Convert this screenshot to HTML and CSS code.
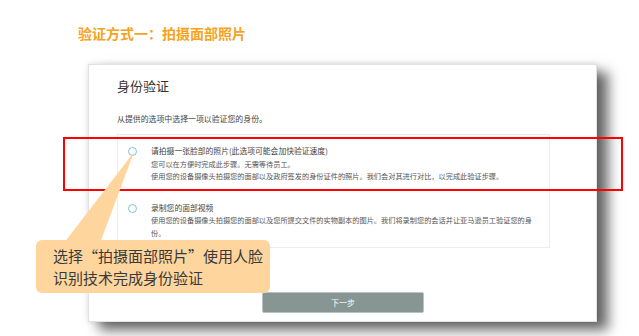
FILE: index.html
```html
<!DOCTYPE html>
<html lang="zh-CN">
<head>
    <meta charset="UTF-8">
    <title>验证方式一：拍摄面部照片</title>
    <link rel="stylesheet" href="styles.css">
</head>
<body>
    <div class="stage">
        <h1 class="title">验证方式一：拍摄面部照片</h1>

        <div class="card">
            <h2 class="heading">身份验证</h2>
            <p class="intro">从提供的选项中选择一项以验证您的身份。</p>

            <div class="options">
                <div class="option">
                    <span class="radio"></span>
                    <div class="optionText">
                        <div class="optionTitle">请拍摄一张脸部的照片(此选项可能会加快验证速度)</div>
                        <div>您可以在方便时完成此步骤。无需等待员工。</div>
                        <div>使用您的设备摄像头拍摄您的面部以及政府签发的身份证件的照片。我们会对其进行对比，以完成此验证步骤。</div>
                    </div>
                </div>
                <div class="option">
                    <span class="radio"></span>
                    <div class="optionText">
                        <div class="optionTitle">录制您的面部视频</div>
                        <div>使用您的设备摄像头拍摄您的面部以及您所提交文件的实物副本的图片。我们将录制您的会话并让亚马逊员工验证您的身份。</div>
                    </div>
                </div>
            </div>

            <button class="nextButton">下一步</button>
        </div>

        <!-- annotations drawn over the screenshot -->
        <div class="highlight"></div>
        <svg class="tail" width="639" height="336" viewBox="0 0 639 336">
            <polygon points="64,243 100,243 134,152" fill="#ffd59e"/>
        </svg>
        <div class="callout">
            选择“拍摄面部照片”使用人脸<br>识别技术完成身份验证
        </div>
    </div>
</body>
</html>
```

FILE: styles.css
```css
*{
    box-sizing: border-box;
}

body{
    margin: 0;
    background-color: #fff;
    font-family: "Noto Sans CJK SC", "Noto Sans", sans-serif;
    color: #333;
}

.stage{
    position: relative;
    width: 639px;
    height: 336px;
    overflow: hidden;
}

.title{
    margin: 0;
    padding: 23px 0 0 78px;
    font-size: 14px;
    line-height: 20px;
    font-weight: bold;
    color: #f5a31f;
}

.card{
    margin: 21px 0 0 88px;
    width: 509px;
    height: 258px;
    padding: 12px 0 0 28px;
    background-color: #fff;
    border: 1px solid #e2e2e2;
    box-shadow: 11px 8px 12px rgba(0, 0, 0, 0.6), 0 0 6px rgba(0, 0, 0, 0.12);
}

.heading{
    margin: 0;
    font-size: 13px;
    line-height: 18px;
    font-weight: normal;
    color: #333;
}

.intro{
    margin: 17px 0 0 0;
    font-size: 7.9px;
    line-height: 14px;
    color: #444;
}

.options{
    margin: 8px 0 0 0;
    width: 433px;
    height: 114px;
    padding: 10px 16px 0 10px;
    border: 1px solid #ececec;
}

.option{
    display: flex;
    gap: 5px;
    font-size: 7.2px;
    line-height: 12.5px;
    color: #555;
}

.option + .option{
    margin-top: 19px;
}

.radio{
    flex: none;
    width: 9px;
    height: 9px;
    margin-top: 2px;
    border: 1px solid #7cc4d6;
    border-radius: 50%;
    background-color: #fff;
}

.optionText{
    width: 390px;
    padding-left: 9px;
}

.optionTitle{
    font-size: 7.8px;
    color: #444;
}

.nextButton{
    display: block;
    margin: 44px 0 0 145px;
    width: 162px;
    height: 21px;
    padding: 0;
    border: 1px solid #b9c2c1;
    border-radius: 2px;
    background-color: #879593;
    color: #fff;
    font-family: inherit;
    font-size: 8px;
}

.highlight{
    position: absolute;
    left: 63px;
    top: 137px;
    width: 560px;
    height: 54px;
    border: 2px solid #f00;
}

.tail{
    position: absolute;
    left: 0;
    top: 0;
}

.callout{
    position: absolute;
    left: 36px;
    top: 240px;
    width: 234px;
    height: 53px;
    padding: 5px 0 0 17px;
    border-radius: 6px;
    background-color: #ffd59e;
    font-size: 15px;
    line-height: 22px;
    color: #3a3a3a;
}
```
